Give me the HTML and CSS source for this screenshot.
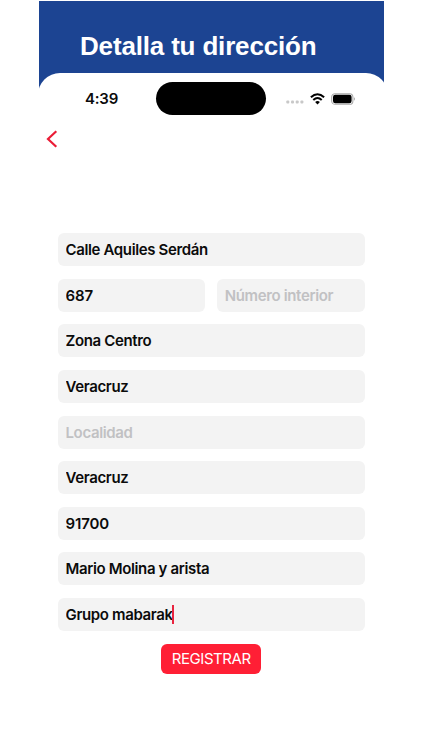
FILE: index.html
```
<!DOCTYPE html>
<html lang="es">
<head>
  <meta charset="UTF-8">
  <meta name="viewport" content="width=device-width, initial-scale=1.0">
  <title>Detalla tu dirección</title>
  <link rel="stylesheet" href="styles.css">
</head>
<body>
  <div class="page">
    <header class="banner">
      <h1>Detalla tu dirección</h1>
    </header>

    <main class="screen">
      <div class="status-bar">
        <span class="time">4:39</span>
        <div class="island"></div>
        <div class="status-icons">
          <svg class="dots" width="18" height="4" viewBox="0 0 18 4" fill="#c8c8c8">
            <rect x="0.3" y="0.5" width="3" height="3" rx="1"/>
            <rect x="5" y="0.5" width="3" height="3" rx="1"/>
            <rect x="9.7" y="0.5" width="3" height="3" rx="1"/>
            <rect x="14.4" y="0.5" width="3" height="3" rx="1"/>
          </svg>
          <svg class="wifi" width="15" height="12" viewBox="0 0 15 12" fill="none" stroke="#000" stroke-width="2">
            <path d="M0.9 4.3Q7.5 -1.9 14.1 4.3"/>
            <path d="M3.3 6.9Q7.5 3 11.7 6.9"/>
            <path d="M7.5 11.5L5.1 9Q7.5 7.1 9.9 9Z" fill="#000" stroke="none"/>
          </svg>
          <svg class="battery" width="25" height="12" viewBox="0 0 25 12">
            <rect x="0.7" y="0.7" width="21.2" height="10.6" rx="3.4" fill="#fff" stroke="#a9a9a9" stroke-width="1.1"/>
            <rect x="2" y="1.8" width="18.6" height="8.4" rx="2.2" fill="#000"/>
            <path d="M23 4.3Q25 6 23 7.7Z" fill="#a9a9a9"/>
          </svg>
        </div>
      </div>

      <button class="back" type="button" aria-label="Volver">
        <svg width="12" height="18" viewBox="0 0 12 18" fill="none" stroke="#ea1c36" stroke-width="2.2">
          <path d="M10.3 1.2L2 9L10.3 16.8"/>
        </svg>
      </button>

      <form class="address-form">
        <input type="text" name="calle" value="Calle Aquiles Serdán">
        <div class="row">
          <input class="number" type="text" name="exterior" value="687">
          <input type="text" name="interior" placeholder="Número interior">
        </div>
        <input type="text" name="colonia" value="Zona Centro">
        <input type="text" name="municipio" value="Veracruz">
        <input type="text" name="localidad" placeholder="Localidad">
        <input type="text" name="estado" value="Veracruz">
        <input class="number" type="text" name="cp" value="91700">
        <input type="text" name="calles" value="Mario Molina y arista">
        <div class="active-field">
          <input type="text" name="referencia" value="Grupo mabarak">
          <span class="caret"></span>
        </div>
        <button class="submit" type="button">REGISTRAR</button>
      </form>
    </main>
  </div>
</body>
</html>
```

FILE: styles.css
```
* {
  box-sizing: border-box;
}

body {
  margin: 0;
  background-color: #fff;
  font-family: Inter, "Liberation Sans", sans-serif;
  color: #0b0b0b;
}

.page {
  width: 345px;
  height: 750px;
  margin-left: 39px;
  padding-top: 1px;
  overflow: hidden;
}

.banner {
  height: 95px;
  background-color: #1c4492;
}

h1 {
  margin: 0;
  padding: 30px 0 0 41px;
  font-family: "Liberation Sans", Arial, sans-serif;
  font-size: 26px;
  line-height: 30px;
  font-weight: bold;
  letter-spacing: -0.17px;
  color: #fff;
  white-space: nowrap;
}

/* The sheet is a little wider than the page so the corners get cut */
.screen {
  width: 350px;
  height: 680px;
  margin: -23.5px 0 0 -1px;
  background-color: #fff;
  border-radius: 22px 22px 0 0;
}

.status-bar {
  display: flex;
  align-items: center;
  height: 52.5px;
  padding-left: 47px;
}

.time {
  width: 71px;
  font-size: 15px;
  font-weight: 600;
  letter-spacing: -0.2px;
}

.island {
  width: 110px;
  height: 33px;
  border-radius: 17px;
  background-color: #000;
}

.status-icons {
  display: flex;
  align-items: center;
  margin-left: 20px;
}

.dots {
  margin-top: 7px;
}

.wifi {
  margin-left: 6px;
}

.battery {
  margin-left: 6px;
}

.back {
  display: block;
  height: 18px;
  margin: 5px 0 0 8px;
  padding: 0;
  border: none;
  background: none;
}

.back svg {
  display: block;
}

.address-form {
  display: flex;
  flex-direction: column;
  gap: 12.6px;
  width: 306.5px;
  margin: 85.2px 0 0 20px;
}

input {
  display: block;
  width: 100%;
  height: 33px;
  padding: 0 7.5px;
  border: none;
  border-radius: 6px;
  background-color: #f3f3f3;
  font-family: inherit;
  font-size: 15px;
  font-weight: 600;
  letter-spacing: -0.36px;
  color: #0b0b0b;
}

input::placeholder {
  color: #c1c1c3;
  opacity: 1;
}

.number {
  letter-spacing: -0.1px;
}

.row {
  display: flex;
  gap: 12px;
}

.active-field {
  position: relative;
}

.caret {
  position: absolute;
  top: 7px;
  left: 114px;
  width: 2px;
  height: 19px;
  background-color: #e8243f;
}

.submit {
  align-self: center;
  width: 100px;
  height: 30px;
  padding: 0;
  border: none;
  border-radius: 6px;
  background-color: #ff1f35;
  font-family: inherit;
  font-size: 15px;
  letter-spacing: -0.45px;
  color: #fff;
}
```
